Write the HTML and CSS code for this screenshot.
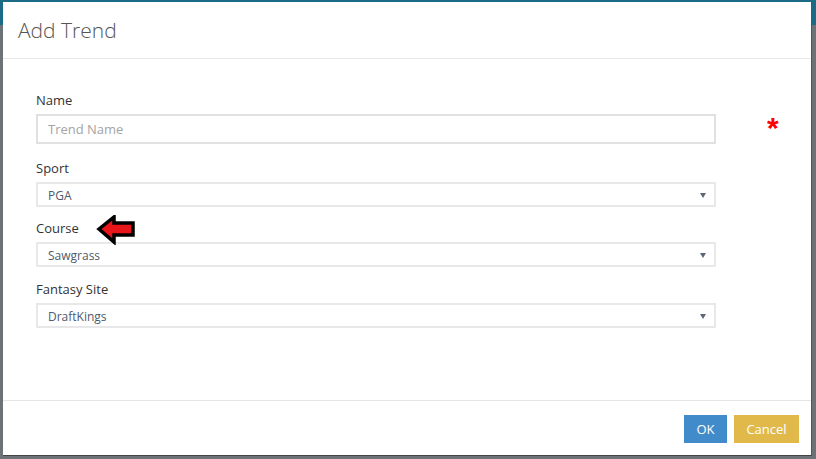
FILE: index.html
```html
<!DOCTYPE html>
<html>
<head>
<meta charset="utf-8">
<link rel="stylesheet" href="styles.css">
</head>
<body>
<div class="backdrop">
  <div class="modal">
    <div class="modal-header">
      <h4 class="modal-title">Add Trend</h4>
    </div>
    <div class="modal-body">
      <div class="group name">
        <label class="label">Name</label>
        <div class="row">
          <input class="input" type="text" placeholder="Trend Name">
          <span class="required">*</span>
        </div>
      </div>
      <div class="group sport">
        <label class="label">Sport</label>
        <div class="select"><span>PGA</span><span class="caret"></span></div>
      </div>
      <div class="group course">
        <label class="label">Course</label>
        <svg class="pointer" width="42" height="30" viewBox="0 0 42 30">
          <polygon points="3,14 18,2 18,8 37,8 37,20 18,20 18,27" fill="#e8151b" stroke="#000" stroke-width="3.5" stroke-linejoin="miter"/>
        </svg>
        <div class="select"><span>Sawgrass</span><span class="caret"></span></div>
      </div>
      <div class="group">
        <label class="label">Fantasy Site</label>
        <div class="select"><span>DraftKings</span><span class="caret"></span></div>
      </div>
    </div>
    <div class="modal-footer">
      <button class="btn btn-ok">OK</button>
      <button class="btn btn-cancel">Cancel</button>
    </div>
  </div>
</div>
</body>
</html>
```
FILE: styles.css
```css
* { box-sizing: border-box; }
html, body { margin: 0; padding: 0; }
body {
  width: 816px;
  height: 459px;
  overflow: hidden;
  background: #6a6f76;
  font-family: "Open Sans", "Liberation Sans", sans-serif;
}
.backdrop {
  height: 459px;
  padding: 2px 4px 3px 3px;
  background: linear-gradient(to bottom, #1b6a86 0, #1b6a86 25px, #6d7178 25px);
}
.modal {
  height: 454px;
  background: #fff;
  display: flex;
  flex-direction: column;
  border-right: 1px solid #555;
  border-bottom: 1px solid #444;
}
.modal-header {
  height: 57px;
  border-bottom: 1px solid #e8e8e8;
  padding: 14px 15px 0 15px;
}
.modal-title {
  margin: 0;
  font-size: 21px;
  font-weight: 300;
  color: #555;
  line-height: 28px;
}
.modal-body {
  flex: 1;
  padding: 32px 0 0 33px;
  position: relative;
}
.group { margin-bottom: 13px; position: relative; }
.group.name { margin-bottom: 15px; }
.group.sport { margin-bottom: 12px; }
.label {
  display: block;
  font-size: 13px;
  line-height: 18px;
  color: #333;
  margin-bottom: 5px;
}
.row { display: flex; align-items: center; }
.input {
  width: 680px;
  height: 30px;
  border: 2px solid #e1e1e1;
  padding: 0 10px;
  font-family: "Open Sans", "Liberation Sans", sans-serif;
  font-size: 13px;
  color: #555;
  outline: none;
}
.input::placeholder { color: #a4a4a4; }
.required {
  color: #f00;
  font-size: 30px;
  font-weight: bold;
  margin-left: 51px;
  line-height: 30px;
  height: 30px;
  margin-top: -2px;
  font-family: "Liberation Sans", sans-serif;
}
.select {
  width: 680px;
  height: 25px;
  border: 2px solid #e8e8e8;
  padding: 1px 8px 0 10px;
  display: flex;
  align-items: center;
  justify-content: space-between;
  font-size: 12px;
  color: #4f5a6b;
}
.caret {
  width: 0; height: 0;
  border-left: 3px solid transparent;
  border-right: 3px solid transparent;
  border-top: 5px solid #5b6676;
}
.pointer {
  position: absolute;
  left: 60px;
  top: -4px;
}
.modal-footer {
  height: 55px;
  border-top: 1px solid #e5e5e5;
  display: flex;
  justify-content: flex-end;
  align-items: flex-start;
  padding: 14px 12px 0 0;
  gap: 7px;
}
.btn {
  height: 28px;
  border: none;
  color: #fff;
  font-family: "Open Sans", "Liberation Sans", sans-serif;
  font-size: 13px;
  padding: 0;
}
.btn-ok { width: 43px; background: #428bca; }
.btn-cancel { width: 65px; background: #e1b94a; }
```
